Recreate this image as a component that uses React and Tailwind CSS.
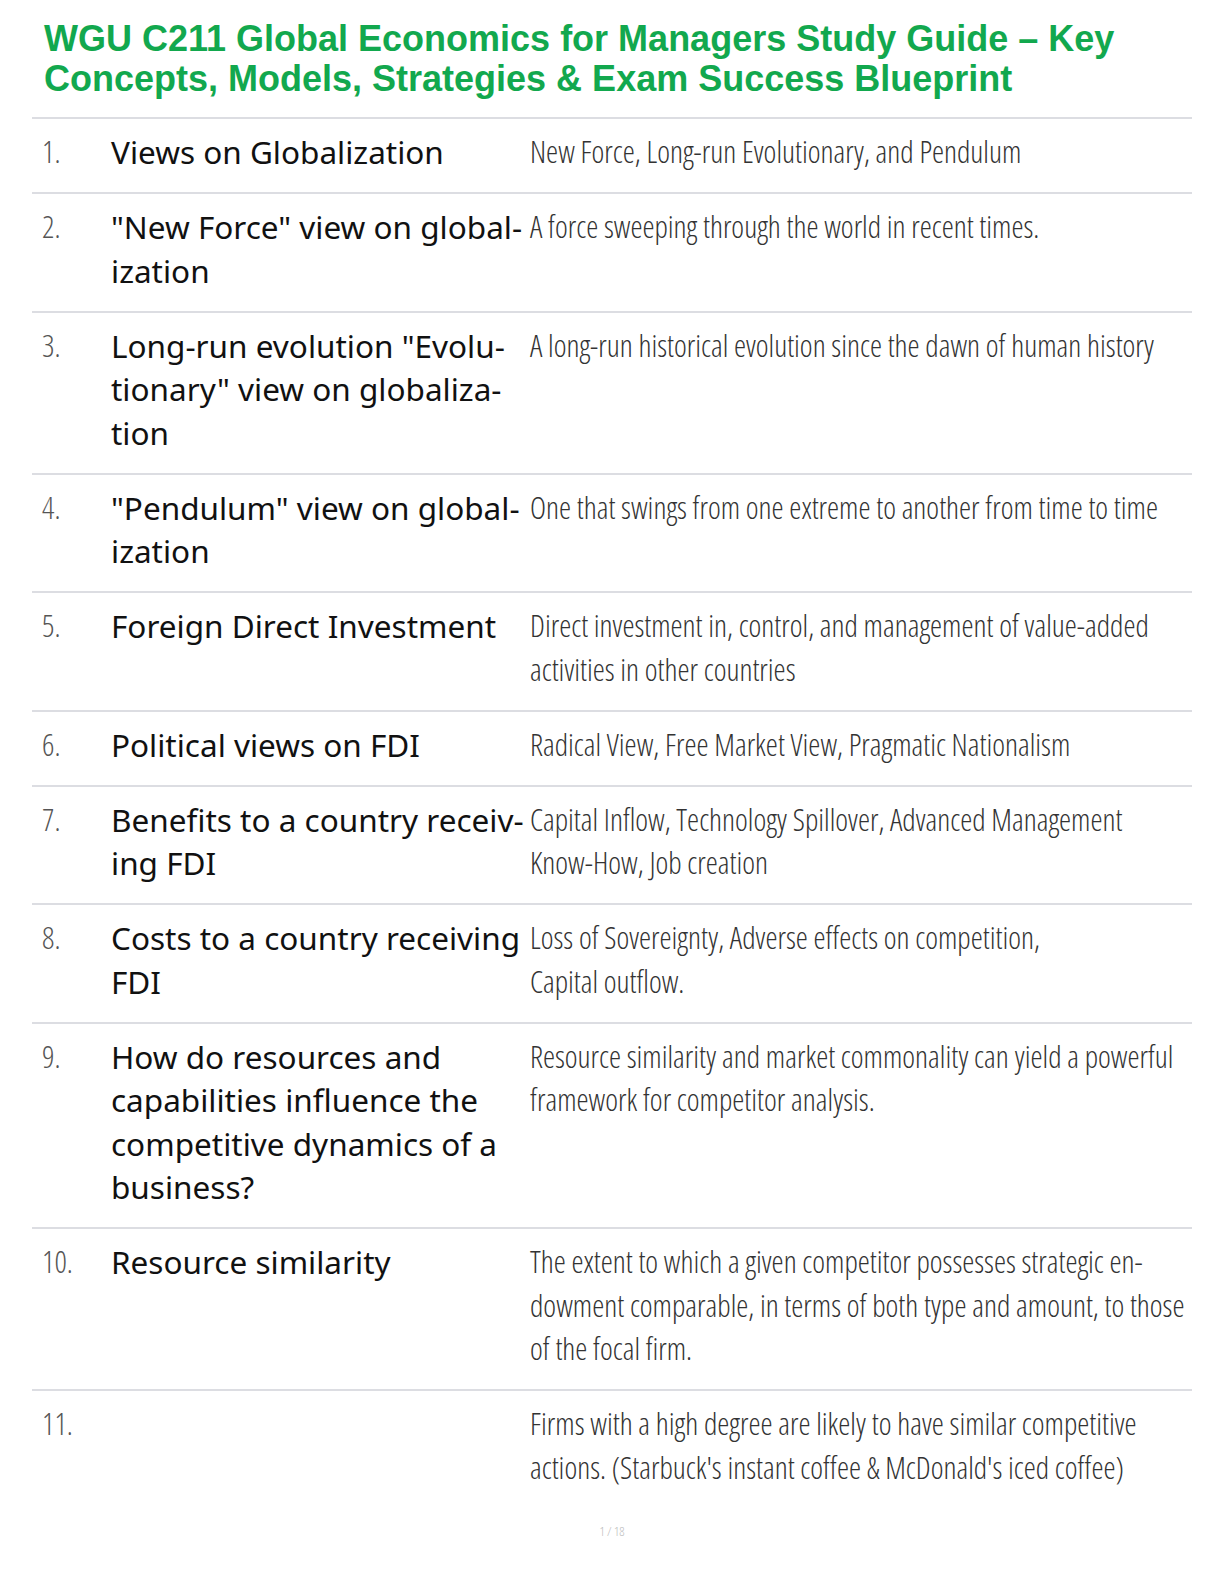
const rows = [
  {
    n: "1.",
    term: ["Views on Globalization"],
    def: ["New Force, Long-run Evolutionary, and Pendulum"],
  },
  {
    n: "2.",
    term: ['"New Force" view on global-', "ization"],
    def: ["A force sweeping through the world in recent times."],
  },
  {
    n: "3.",
    term: ['Long-run evolution "Evolu-', 'tionary" view on globaliza-', "tion"],
    def: ["A long-run historical evolution since the dawn of human history"],
  },
  {
    n: "4.",
    term: ['"Pendulum" view on global-', "ization"],
    def: ["One that swings from one extreme to another from time to time"],
  },
  {
    n: "5.",
    term: ["Foreign Direct Investment"],
    def: [
      "Direct investment in, control, and management of value-added",
      "activities in other countries",
    ],
  },
  {
    n: "6.",
    term: ["Political views on FDI"],
    def: ["Radical View, Free Market View, Pragmatic Nationalism"],
  },
  {
    n: "7.",
    term: ["Benefits to a country receiv-", "ing FDI"],
    def: [
      "Capital Inflow, Technology Spillover, Advanced Management",
      "Know-How, Job creation",
    ],
  },
  {
    n: "8.",
    term: ["Costs to a country receiving", "FDI"],
    def: ["Loss of Sovereignty, Adverse effects on competition,", "Capital outflow."],
  },
  {
    n: "9.",
    term: [
      "How do resources and",
      "capabilities influence the",
      "competitive dynamics of a",
      "business?",
    ],
    def: [
      "Resource similarity and market commonality can yield a powerful",
      "framework for competitor analysis.",
    ],
  },
  {
    n: "10.",
    term: ["Resource similarity"],
    def: [
      "The extent to which a given competitor possesses strategic en-",
      "dowment comparable, in terms of both type and amount, to those",
      "of the focal firm.",
    ],
  },
  {
    n: "11.",
    term: [],
    def: [
      "Firms with a high degree are likely to have similar competitive",
      "actions. (Starbuck's instant coffee & McDonald's iced coffee)",
    ],
  },
];

const lightCond =
  "font-['Open_Sans','Noto_Sans',sans-serif] font-light [font-stretch:75%]";

export default function App() {
  return (
    <div className="w-[1224px] min-h-[1584px] bg-white">
      <div className="mx-[32px] pt-[19px]">
        {/* title */}
        <h1 className="pl-[12px] font-['Liberation_Sans',Arial,sans-serif] text-[36px] font-bold leading-[40px] text-[#12a84e]">
          WGU C211 Global Economics for Managers Study Guide – Key
          <br />
          Concepts, Models, Strategies &amp; Exam Success Blueprint
        </h1>

        <div className="mt-[18px]">
          {rows.map((r) => (
            <div
              key={r.n}
              className="grid grid-cols-[79px_419px_1fr] pt-[11px] pb-[18.5px] border-t-2 border-[#dcdde2] leading-[43.5px]"
            >
              <div className={`pl-[10px] text-[30.5px] text-[#555] ${lightCond}`}>
                {r.n}
              </div>
              <div className="font-['Noto_Sans','Open_Sans',sans-serif] text-[31.5px] text-[#111]">
                {r.term.map((t, j) => (
                  <div key={j} className="whitespace-nowrap">
                    {t}
                  </div>
                ))}
              </div>
              <div className={`text-[30.5px] text-[#333] ${lightCond}`}>
                {r.def.map((t, j) => (
                  <div key={j} className="whitespace-nowrap">
                    {t}
                  </div>
                ))}
              </div>
            </div>
          ))}
        </div>

        {/* page number */}
        <div className={`mt-[14px] text-center text-[13px] text-[#bbb] ${lightCond}`}>
          1 / 18
        </div>
      </div>
    </div>
  );
}
